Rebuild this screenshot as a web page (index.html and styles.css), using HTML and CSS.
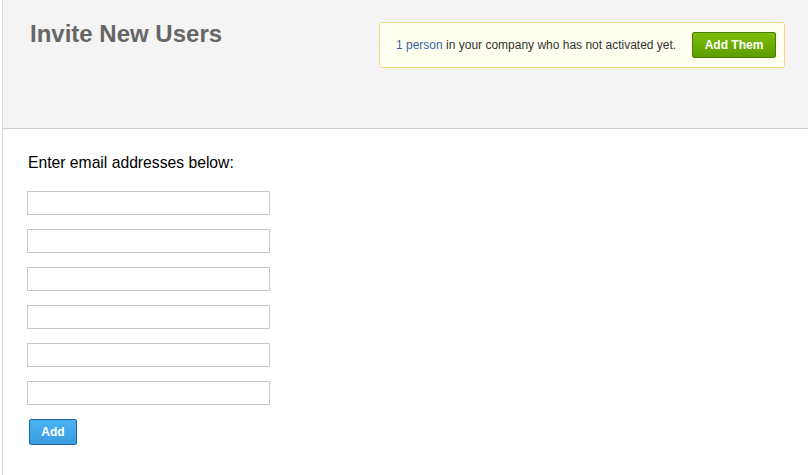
FILE: index.html
```html
<!DOCTYPE html>
<html>
<head>
<meta charset="utf-8">
<link rel="stylesheet" href="styles.css">
</head>
<body>
<div class="page">
  <div class="header">
    <h1 class="title">Invite New Users</h1>
    <div class="notice">
      <span class="notice-text"><a class="link" href="#">1 person</a> in your company who has not activated yet.</span>
      <button class="btn-green">Add Them</button>
    </div>
  </div>
  <div class="content">
    <p class="label">Enter email addresses below:</p>
    <div class="fields">
      <input class="email" type="text">
      <input class="email" type="text">
      <input class="email" type="text">
      <input class="email" type="text">
      <input class="email" type="text">
      <input class="email" type="text">
    </div>
    <button class="btn-blue">Add</button>
  </div>
</div>
</body>
</html>
```
FILE: styles.css
```css
html, body {
  margin: 0;
  padding: 0;
  background: #fff;
  font-family: "Liberation Sans", Arial, sans-serif;
}
.page {
  margin-left: 2px;
  border-left: 1px solid #dcdcdc;
  min-height: 475px;
}
.header {
  height: 129px;
  box-sizing: border-box;
  background: #f4f4f4;
  border-bottom: 1px solid #cfcfcf;
  display: flex;
  justify-content: space-between;
  align-items: flex-start;
  padding: 0 23px 0 27px;
}
.title {
  margin: 20px 0 0 0;
  font-size: 24px;
  line-height: 28px;
  font-weight: bold;
  color: #666;
}
.notice {
  margin-top: 22px;
  width: 406px;
  height: 46px;
  box-sizing: border-box;
  background: #fffff0;
  border: 1px solid #f5d98a;
  border-radius: 3px;
  display: flex;
  align-items: center;
  justify-content: space-between;
  padding: 0 8px 0 16px;
}
.notice-text {
  font-size: 12px;
  color: #333;
}
.link {
  color: #3b5fa8;
  text-decoration: none;
}
.btn-green {
  width: 84px;
  height: 26px;
  box-sizing: border-box;
  border: 1px solid #4b7c06;
  border-radius: 2px;
  background: linear-gradient(#7bbd04, #5d9d00);
  color: #fff;
  font-family: "Liberation Sans", Arial, sans-serif;
  font-size: 12px;
  font-weight: bold;
  padding: 0;
}
.content {
  padding: 24px 0 0 24px;
}
.label {
  margin: 0 0 0 1px;
  font-size: 15.7px;
  line-height: 20px;
  color: #000;
}
.fields {
  margin-top: 18px;
  display: flex;
  flex-direction: column;
  gap: 14px;
  align-items: flex-start;
}
.email {
  width: 243px;
  height: 24px;
  box-sizing: border-box;
  border: 1px solid #c8c8c8;
  margin: 0;
  padding: 2px 4px;
  background: #fff;
}
.btn-blue {
  margin: 14px 0 0 2px;
  width: 48px;
  height: 26px;
  box-sizing: border-box;
  border: 1px solid #1f66a0;
  border-radius: 2px;
  background: linear-gradient(#4ab3f4, #3c9be0);
  color: #fff;
  font-family: "Liberation Sans", Arial, sans-serif;
  font-size: 12px;
  font-weight: bold;
  padding: 0;
}
```
